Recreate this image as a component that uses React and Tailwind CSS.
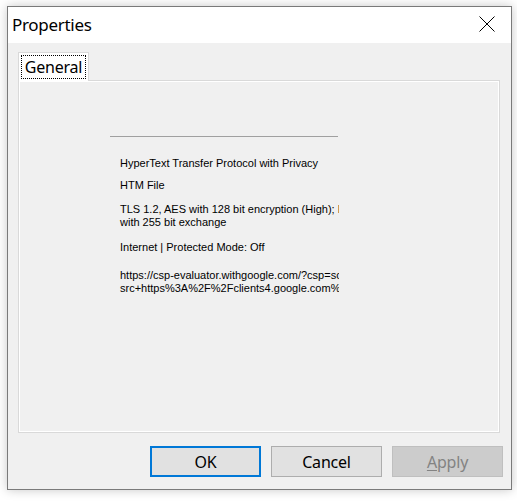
import React from 'react';

const ui = { fontFamily: '"Segoe UI", "Noto Sans", sans-serif' };
const classic = { fontFamily: '"Liberation Sans", Arial, sans-serif' };

const Button = ({ children, variant }) => {
  const styles = {
    default: 'border-2 border-[#0078d7] bg-[#e1e1e1] text-black',
    normal: 'border border-[#adadad] bg-[#e1e1e1] text-black',
    disabled: 'border border-[#bfbfbf] bg-[#cccccc] text-[#838383]',
  };
  return (
    <div
      className={`w-[111px] h-[31px] flex items-center justify-center text-[16px] tracking-[-0.2px] ${styles[variant]}`}
      style={ui}
    >
      {children}
    </div>
  );
};

const App = () => {
  return (
    <div className="w-[517px] h-[502px] bg-white pt-[6px] pl-[7px]">
      <div className="w-[505px] h-[484px] border border-[#7a7a7a] bg-[#f0f0f0] flex flex-col shadow-[0_0_10px_rgba(0,0,0,0.22)]">
        {/* title bar */}
        <div className="h-[36px] bg-white flex items-center justify-between pl-[4px] pr-[16px] shrink-0">
          <span className="text-[17px] tracking-[-0.3px] text-black leading-none pb-[1px]" style={ui}>
            Properties
          </span>
          <svg width="16" height="16" viewBox="0 0 16 16" className="mt-[-2px]">
            <path d="M0.5 0.5 L15.5 15.5 M15.5 0.5 L0.5 15.5" stroke="#000" strokeWidth="1" fill="none" />
          </svg>
        </div>

        {/* body */}
        <div className="flex-1 flex flex-col pt-[9px] pl-[10px] pr-[8px]">
          <div className="flex">
            <div className="relative z-10 -mb-px h-[29px] w-[71px] border border-b-0 border-[#d9d9d9] bg-white p-[2px]">
              <div
                className="h-[24px] border border-dotted border-black flex items-center justify-center text-[16px] tracking-[-0.2px] text-black leading-none"
                style={ui}
              >
                General
              </div>
            </div>
          </div>
          <div className="w-[482px] h-[353px] border border-[#d9d9d9] bg-[#f0f0f0] shadow-[inset_1px_1px_0_#fff,inset_-1px_-1px_0_#fff] pl-[91px] pt-[55px]">
            <div className="w-[228px] h-px bg-[#a0a0a0]" />
            <div className="w-[229px] pl-[10px] overflow-hidden whitespace-nowrap text-[11px] leading-[13px] text-black" style={classic}>
              <div className="mt-[20px]">HyperText Transfer Protocol with Privacy</div>
              <div className="mt-[9px]">HTM File</div>
              <div className="mt-[11px]">TLS 1.2, AES with 128 bit encryption (High); ECDH_P256</div>
              <div>with 255 bit exchange</div>
              <div className="mt-[12px]">Internet | Protected Mode: Off</div>
              <div className="mt-[15px]">https://csp-evaluator.withgoogle.com/?csp=script-</div>
              <div>src+https%3A%2F%2Fclients4.google.com%2F</div>
            </div>
          </div>

          {/* buttons */}
          <div className="flex justify-end gap-[10px] mt-[13px]">
            <Button variant="default">OK</Button>
            <Button variant="normal">Cancel</Button>
            <Button variant="disabled">
              <span>
                <span className="underline underline-offset-2">A</span>pply
              </span>
            </Button>
          </div>
        </div>
      </div>
    </div>
  );
};

export default App;
